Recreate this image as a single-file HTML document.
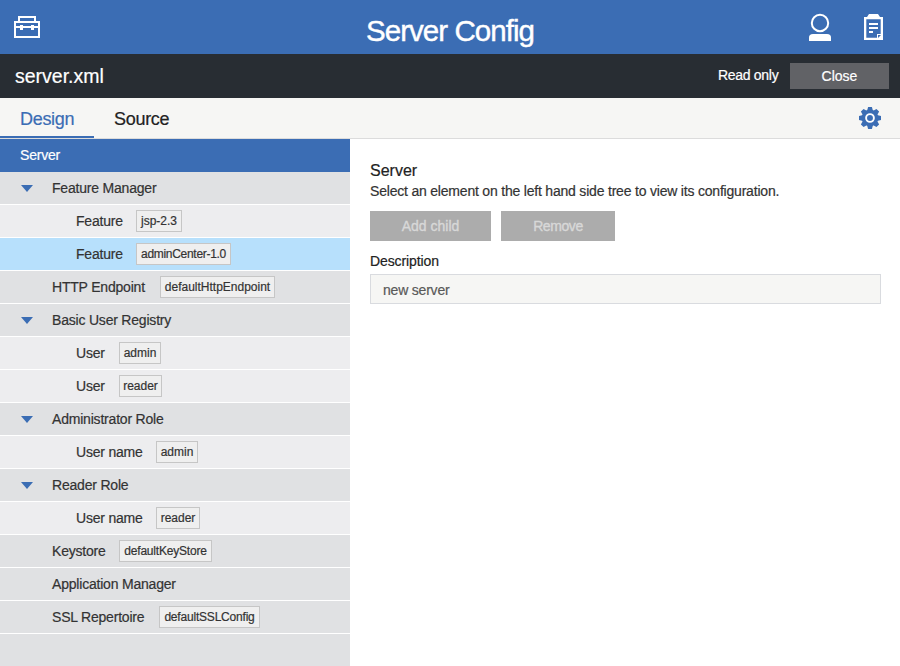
<!DOCTYPE html>
<html><head><meta charset="utf-8">
<style>
*{box-sizing:border-box;margin:0;padding:0}
html,body{width:900px;height:666px;overflow:hidden;background:#fff;font-family:"Liberation Sans",sans-serif;color:#333;-webkit-text-stroke:0.2px currentColor}
.abs{position:absolute}
#hdr{position:absolute;left:0;top:0;width:900px;height:54px;background:#3b6db4}
#title{position:absolute;left:0;width:900px;top:13.5px;text-align:center;color:#fff;font-size:29.5px;line-height:34px;white-space:nowrap;letter-spacing:-0.95px;-webkit-text-stroke:0.4px #fff}
#bar{position:absolute;left:0;top:54px;width:900px;height:44px;background:#282d33}
#fname{position:absolute;left:15px;top:64px;color:#fff;font-size:19.5px;line-height:24px}
#ro{position:absolute;left:718px;top:66px;color:#fff;font-size:14px;line-height:18px;letter-spacing:-0.3px}
#close{position:absolute;left:790px;top:63px;width:99px;height:26px;background:#616266;color:#fff;font-size:14px;line-height:26px;text-align:center}
#tabs{position:absolute;left:0;top:98px;width:900px;height:41px;background:#f6f6f4;border-bottom:1px solid #dcdcdc}
.tab{position:absolute;top:11px;font-size:18px;line-height:20px;letter-spacing:-0.3px}
#ul{position:absolute;left:0;top:136px;width:94px;height:2px;background:#3b6db4}
#left{position:absolute;left:0;top:139px;width:350px;height:527px;background:#e0e1e3}
.row{position:absolute;left:0;width:350px;height:32px;font-size:14px;line-height:32px;color:#333;white-space:nowrap;letter-spacing:-0.2px}
.l1{background:#e0e1e3}
.l2{background:#ededef}
.sel{background:#b7e0fc}
.row span.t{position:absolute;top:0}
.tag{position:absolute;top:5px;height:22px;line-height:20px;border:1px solid #c6c6c6;background:#efefef;font-size:12px;text-align:center;color:#333;letter-spacing:0}
.tri{position:absolute;left:21px;top:13px;width:0;height:0;border-left:6px solid transparent;border-right:6px solid transparent;border-top:7px solid #3b6db4}
.sep{position:absolute;left:0;width:350px;height:1px;background:#fff}
#right{position:absolute;left:350px;top:139px;width:550px;height:527px;background:#fff}
.btn{position:absolute;top:211px;height:30px;background:#acacac;color:#d8d8d8;-webkit-text-stroke:0.35px #d8d8d8;font-size:14px;line-height:30px;text-align:center}
#desc{position:absolute;left:370px;top:274px;width:511px;height:30px;background:#f6f6f4;border:1px solid #d9dbdf;font-size:14px;line-height:30px;padding-left:12px;color:#595959;letter-spacing:-0.2px}
</style></head><body>
<div id="hdr"></div>
<div id="title">Server Config</div>
<!-- toolbox icon -->
<svg class="abs" style="left:0;top:0" width="60" height="54" viewBox="0 0 60 54">
  <g fill="none" stroke="#fff" stroke-width="2">
    <rect x="19" y="17" width="16" height="5"/>
    <rect x="15" y="22" width="24" height="15"/>
    <line x1="15" y1="27" x2="39" y2="27"/>
  </g>
  <rect x="20" y="25" width="3" height="5" fill="#fff"/>
  <rect x="31" y="25" width="3" height="5" fill="#fff"/>
</svg>
<!-- user icon -->
<svg class="abs" style="left:790px;top:0" width="60" height="54" viewBox="790 0 60 54">
  <circle cx="820" cy="23" r="8.2" fill="none" stroke="#fff" stroke-width="2"/>
  <path d="M809 41 V37.5 Q809 34 813 34 H827 Q831 34 831 37.5 V41 Z" fill="#fff"/>
</svg>
<!-- clipboard icon -->
<svg class="abs" style="left:850px;top:0" width="50" height="54" viewBox="850 0 50 54">
  <path d="M864 17 H867 L869 14 H878 L880 17 H883 V40 H864 Z M866.3 19.2 V37.8 H877 V34 H880.7 V19.2 Z" fill="#fff" fill-rule="evenodd"/>
  <rect x="869" y="23" width="9" height="2" fill="#fff"/>
  <rect x="869" y="27" width="9" height="2" fill="#fff"/>
  <rect x="869" y="31" width="4" height="2" fill="#fff"/>
  <path d="M878 35 H881 L878 38 Z" fill="#3b6db4"/>
</svg>
<div id="bar"></div>
<div id="fname">server.xml</div>
<div id="ro">Read only</div>
<div id="close">Close</div>
<div id="tabs"></div>
<div class="tab" style="left:20px;top:109px;color:#3b6db4">Design</div>
<div class="tab" style="left:114px;top:109px;color:#222">Source</div>
<div id="ul"></div>
<!-- gear -->
<svg class="abs" style="left:850px;top:98px" width="40" height="40" viewBox="850 98 40 40">
  <g fill="#3b6db4">
    <circle cx="870" cy="118" r="8.2"/>
    <path d="M867 111 L868.1 107 H871.9 L873 111 Z" transform="rotate(0 870 118)"/>
    <path d="M867 111 L868.1 107 H871.9 L873 111 Z" transform="rotate(45 870 118)"/>
    <path d="M867 111 L868.1 107 H871.9 L873 111 Z" transform="rotate(90 870 118)"/>
    <path d="M867 111 L868.1 107 H871.9 L873 111 Z" transform="rotate(135 870 118)"/>
    <path d="M867 111 L868.1 107 H871.9 L873 111 Z" transform="rotate(180 870 118)"/>
    <path d="M867 111 L868.1 107 H871.9 L873 111 Z" transform="rotate(225 870 118)"/>
    <path d="M867 111 L868.1 107 H871.9 L873 111 Z" transform="rotate(270 870 118)"/>
    <path d="M867 111 L868.1 107 H871.9 L873 111 Z" transform="rotate(315 870 118)"/>
  </g>
  <circle cx="870" cy="118" r="3.9" fill="none" stroke="#fff" stroke-width="1.9"/>
</svg>
<div id="left"></div>
<div id="right"></div>
<div id="rtitle" class="abs" style="left:370px;top:161px;font-size:16px;line-height:20px;color:#222">Server</div>
<div id="rsub" class="abs" style="left:370px;top:182px;font-size:14px;line-height:18px;color:#333;letter-spacing:-0.2px;white-space:nowrap">Select an element on the left hand side tree to view its configuration.</div>
<div class="btn" style="left:370px;width:121px">Add child</div>
<div class="btn" style="left:501px;width:114px;letter-spacing:-0.4px">Remove</div>
<div class="abs" style="left:370px;top:252px;font-size:14px;line-height:18px;color:#222;letter-spacing:-0.1px">Description</div>
<div id="desc">new server</div>
<div id="tree">
<div class="row srv" style="top:139px;height:33px;background:#3b6db4;color:#fff"><span class="t" style="left:20px">Server</span></div>
<div class="row l1" style="top:172px"><i class="tri"></i><span class="t" style="left:52px">Feature Manager</span></div>
<div class="sep" style="top:204px"></div>
<div class="row l2" style="top:205px"><span class="t" style="left:76px">Feature</span><span class="tag" style="left:136px;width:46px">jsp-2.3</span></div>
<div class="sep" style="top:237px"></div>
<div class="row sel" style="top:238px"><span class="t" style="left:76px">Feature</span><span class="tag" style="left:136px;width:95px;letter-spacing:-0.3px">adminCenter-1.0</span></div>
<div class="sep" style="top:270px"></div>
<div class="row l1" style="top:271px"><span class="t" style="left:52px">HTTP Endpoint</span><span class="tag" style="left:160px;width:115px">defaultHttpEndpoint</span></div>
<div class="sep" style="top:303px"></div>
<div class="row l1" style="top:304px"><i class="tri"></i><span class="t" style="left:52px">Basic User Registry</span></div>
<div class="sep" style="top:336px"></div>
<div class="row l2" style="top:337px"><span class="t" style="left:76px">User</span><span class="tag" style="left:119px;width:42px">admin</span></div>
<div class="sep" style="top:369px"></div>
<div class="row l2" style="top:370px"><span class="t" style="left:76px">User</span><span class="tag" style="left:119px;width:43px">reader</span></div>
<div class="sep" style="top:402px"></div>
<div class="row l1" style="top:403px"><i class="tri"></i><span class="t" style="left:52px">Administrator Role</span></div>
<div class="sep" style="top:435px"></div>
<div class="row l2" style="top:436px"><span class="t" style="left:76px">User name</span><span class="tag" style="left:156px;width:42px">admin</span></div>
<div class="sep" style="top:468px"></div>
<div class="row l1" style="top:469px"><i class="tri"></i><span class="t" style="left:52px">Reader Role</span></div>
<div class="sep" style="top:501px"></div>
<div class="row l2" style="top:502px"><span class="t" style="left:76px">User name</span><span class="tag" style="left:156px;width:44px">reader</span></div>
<div class="sep" style="top:534px"></div>
<div class="row l1" style="top:535px"><span class="t" style="left:52px">Keystore</span><span class="tag" style="left:119px;width:93px;letter-spacing:-0.2px">defaultKeyStore</span></div>
<div class="sep" style="top:567px"></div>
<div class="row l1" style="top:568px"><span class="t" style="left:52px">Application Manager</span></div>
<div class="sep" style="top:600px"></div>
<div class="row l1" style="top:601px"><span class="t" style="left:52px">SSL Repertoire</span><span class="tag" style="left:159px;width:101px;letter-spacing:-0.2px">defaultSSLConfig</span></div>
<div class="sep" style="top:633px"></div>
</div>
</body></html>
